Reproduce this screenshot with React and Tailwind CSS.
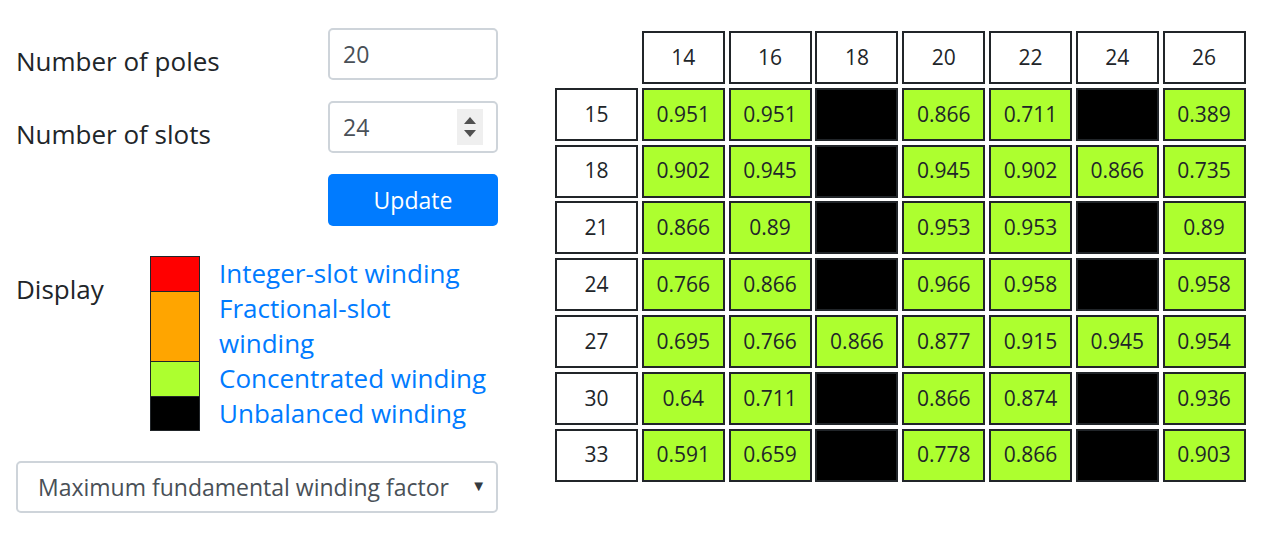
import React from "react"

const cols = [14, 16, 18, 20, 22, 24, 26]

// null = unbalanced (black cell)
const rows = [
  [15, ["0.951", "0.951", null, "0.866", "0.711", null, "0.389"]],
  [18, ["0.902", "0.945", null, "0.945", "0.902", "0.866", "0.735"]],
  [21, ["0.866", "0.89", null, "0.953", "0.953", null, "0.89"]],
  [24, ["0.766", "0.866", null, "0.966", "0.958", null, "0.958"]],
  [27, ["0.695", "0.766", "0.866", "0.877", "0.915", "0.945", "0.954"]],
  [30, ["0.64", "0.711", null, "0.866", "0.874", null, "0.936"]],
  [33, ["0.591", "0.659", null, "0.778", "0.866", null, "0.903"]],
]

const legend = [
  { color: "bg-[#ff0000]", label: "Integer-slot winding" },
  { color: "bg-[#ffa500]", label: "Fractional-slot winding" },
  { color: "bg-[#adff2f]", label: "Concentrated winding" },
  { color: "bg-[#000000]", label: "Unbalanced winding" },
]

const Cell = ({ children, fill = "bg-white" }) => (
  <div className={`h-[53px] border-2 border-[#212529] ${fill} flex items-center justify-center text-[21px] text-[#212529]`}>
    {children}
  </div>
)

const Field = ({ label, value, spinner }) => (
  <div className="flex items-start justify-between">
    <span className="pt-[15px] text-[26px] leading-[36px] text-[#212529]">{label}</span>
    <div className="relative w-[170px] h-[52px] border-2 border-[#ced4da] rounded-[5px] bg-white flex items-center px-[13px] text-[23px] text-[#495057]">
      {value}
      {spinner && (
        <div className="absolute right-[13px] top-[6px] w-[26px] h-[36px] bg-[#efefef] flex flex-col items-center justify-center gap-[6px]">
          <svg width="12" height="7" viewBox="0 0 12 7"><path d="M0 7 L6 0 L12 7 Z" fill="#505050" /></svg>
          <svg width="12" height="7" viewBox="0 0 12 7"><path d="M0 0 L6 7 L12 0 Z" fill="#505050" /></svg>
        </div>
      )}
    </div>
  </div>
)

export default function App() {
  return (
    <div className="w-[1280px] h-[540px] bg-white flex items-start gap-[57px] pl-4 pt-[28px] font-['Open_Sans',sans-serif]">
      <div className="w-[482px] flex flex-col">
        <Field label="Number of poles" value="20" />
        <div className="mt-[21px]">
          <Field label="Number of slots" value="24" spinner />
        </div>
        <button className="self-end mt-[21px] w-[170px] h-[52px] rounded-[5px] bg-[#007bff] text-white text-[23px]">
          Update
        </button>

        <div className="mt-[30px] flex items-start">
          <span className="w-[134px] shrink-0 pt-[15px] text-[26px] leading-[36px] text-[#212529]">Display</span>
          <div className="flex flex-col">
            {legend.map((item, i) => (
              <div key={item.label} className="flex items-stretch">
                <div
                  className={`w-[50px] shrink-0 border-x border-t border-[#212529] ${item.color} ${i === legend.length - 1 ? "border-b" : ""}`}
                />
                <span className="w-[290px] pl-[19px] text-[26px] leading-[35px] text-[#007bff]">{item.label}</span>
              </div>
            ))}
          </div>
        </div>

        <div className="mt-[30px] relative h-[52px] border-2 border-[#ced4da] rounded-[5px] flex items-center pl-[20px] text-[23px] text-[#495057]">
          Maximum fundamental winding factor
          <span className="absolute right-[10px] top-[11px] text-[15px] text-[#343a40]">▼</span>
        </div>
      </div>

      <div className="mt-[3px] grid grid-cols-[repeat(8,83px)] gap-[3.8px]">
        <div />
        {cols.map((c) => (
          <Cell key={c}>{c}</Cell>
        ))}
        {rows.map(([slots, vals]) => (
          <React.Fragment key={slots}>
            <Cell>{slots}</Cell>
            {vals.map((v, i) => (
              <Cell key={i} fill={v ? "bg-[#adff2f]" : "bg-black"}>
                {v}
              </Cell>
            ))}
          </React.Fragment>
        ))}
      </div>
    </div>
  )
}
